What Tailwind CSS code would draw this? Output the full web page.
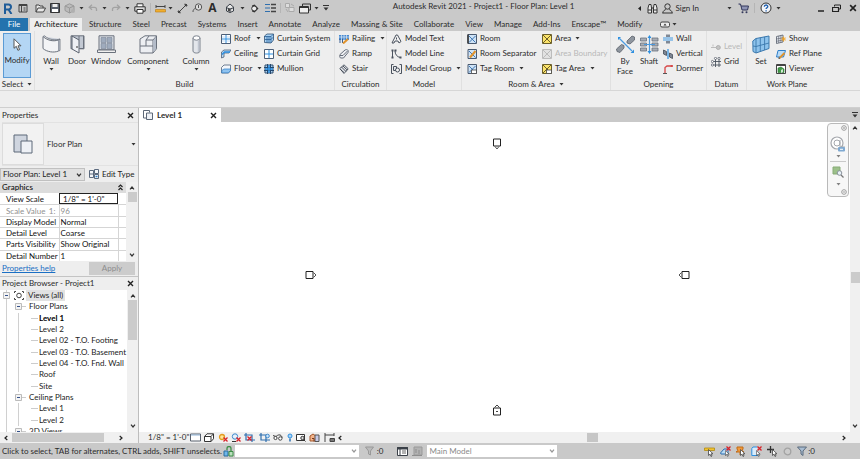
<!DOCTYPE html>
<html lang="en">
<head>
  <meta charset="UTF-8" />
  <meta name="viewport" content="width=device-width, initial-scale=1.0" />
  <title>Autodesk Revit 2021 - Project1 - Floor Plan: Level 1</title>
  <script src="https://cdn.jsdelivr.net/npm/@tailwindcss/browser@4"></script>
</head>
<body class="h-screen overflow-hidden flex flex-col bg-[#eeeeee] text-[#2b2b2b] text-[8px] leading-[11px] font-['Lato','Noto_Sans',sans-serif] cursor-default">

  <!-- Shared glyphs -->
  <svg class="hidden">
    <symbol id="caret" viewBox="0 0 5 3"><path d="M0.5 0h4L2.500 2.500z" fill="#333" /></symbol>
    <symbol id="up" viewBox="0 0 6 4"><path d="M1 3.300 3 1l2 2.300" fill="none" stroke="#333" stroke-width="1.200" /></symbol>
    <symbol id="down" viewBox="0 0 6 4"><path d="M1 .7 3 3 5 .7" fill="none" stroke="#333" stroke-width="1.200" /></symbol>
    <symbol id="left" viewBox="0 0 4 6"><path d="M3.300 1 1 3l2.300 2" fill="none" stroke="#222" stroke-width="1.200" /></symbol>
    <symbol id="right" viewBox="0 0 4 6"><path d="M.7 1 3 3 .7 5" fill="none" stroke="#222" stroke-width="1.200" /></symbol>
    <symbol id="close" viewBox="0 0 7 7"><path d="M1 1l5 5M6 1 1 6" fill="none" stroke="#222" stroke-width="1.400" /></symbol>
    <symbol id="plan" viewBox="0 0 20 20"><path d="M1 1h13v17H1z" fill="#cfd5df" stroke="#5d6878" /><path d="M8 7h11v12H8z" fill="#eef1f6" stroke="#5d6878" /></symbol>
    <symbol id="redx" viewBox="0 0 5 5"><path d="M.5.5l4 4M4.500.5l-4 4" stroke="#d8232a" stroke-width="1.300" /></symbol>
    <symbol id="pointer" viewBox="0 0 6 8"><path d="M.5.5v6l1.500-1.300 1 2.300 1-.5-1-2.200h2z" fill="#fff" stroke="#444" stroke-width=".8" /></symbol>
    <symbol id="minusbox" viewBox="0 0 7 7"><path d="M.5.5h6v6h-6z" fill="#f4f4f4" stroke="#bbb" /><path d="M2 3.500h3" stroke="#34508a" /></symbol>
    <symbol id="binder" viewBox="0 0 11 11"><path d="M.5 1.500h10v8H.5z" fill="#fff" stroke="#3a4048" /><path d="M.5 1.500h10v1.500H.5zM3 3v6.500" fill="#3a4048" stroke="#3a4048" /><path d="M5 5h4M5 7h4" stroke="#666" /></symbol>
  </svg>

  <!-- Title bar -->
  <header class="h-4 shrink-0 flex items-center bg-[#c9c9c9]">
    <div class="w-[34px] flex items-center gap-[5px] pl-[3px]">
      <svg class="w-[10px] h-[11px]" viewBox="0 0 10 11"><path d="M2 11V1.500h3.500a2.300 2.300 0 0 1 0 5H2M5.500 6.500 8.500 11" fill="none" stroke="#1f5c99" stroke-width="2" /></svg>
      <svg class="w-[10px] h-[10px]" viewBox="0 0 10 10"><path d="M1 1.500h8v7.500H1z" fill="none" stroke="#444" /><path d="M1 2.500h8M3.500 3v6M5.500 5h2M5.500 7h2" stroke="#444" /></svg>
    </div>
    <nav class="flex items-center gap-1 pl-[1px]" aria-label="Quick access">
      <button aria-label="Open"><svg class="w-[11px] h-[9px]" viewBox="0 0 11 9"><path d="M1 8V1h3l1 1h3v2M1 8l2-4h7.500L8.500 8z" fill="#e8e8e8" stroke="#444" /></svg></button>
      <button aria-label="Save"><svg class="w-[10px] h-[10px]" viewBox="0 0 10 10"><path d="M.5.5h9v9h-9z" fill="#59606b" stroke="#333" /><path d="M2.500 1h5v3h-5z" fill="#eee" /><path d="M2 6h6v3H2z" fill="#fff" /></svg></button>
      <button aria-label="Synchronize" class="flex items-center gap-[3px]"><svg class="w-[12px] h-[11px]" viewBox="0 0 12 11"><path d="M5.500.8 10 3v4.500L5.500 10 1 7.500V3z" fill="#bbb" stroke="#999" /><path d="M1 3l4.500 2L10 3M5.500 5v5" fill="none" stroke="#999" /><circle cx="9" cy="8" r="2" fill="#b0b0b0" /></svg><svg class="w-[5px] h-[3px]"><use href="#caret" /></svg></button>
      <button aria-label="Undo" class="flex items-center gap-1"><svg class="w-[10px] h-[8px]" viewBox="0 0 10 8"><path d="M4 .8 1.200 3.300 4 5.800M1.500 3.300H6.500a2 2 0 0 1 2 2V7" fill="none" stroke="#a2a2a2" stroke-width="1.300" /></svg><svg class="w-[5px] h-[3px]"><use href="#caret" /></svg></button>
      <button aria-label="Redo" class="flex items-center gap-1"><svg class="w-[10px] h-[8px]" viewBox="0 0 10 8"><path d="M6 .8 8.800 3.300 6 5.800M8.500 3.300H3.500a2 2 0 0 0-2 2V7" fill="none" stroke="#a2a2a2" stroke-width="1.300" /></svg><svg class="w-[5px] h-[3px]"><use href="#caret" /></svg></button>
      <button aria-label="Print"><svg class="w-[12px] h-[11px]" viewBox="0 0 12 11"><path d="M3 4V.8h6V4" fill="#fff" stroke="#333" /><path d="M.8 3.800h10.400v4.400H.8z" fill="#dcdcdc" stroke="#333" /><path d="M3 6.500h6v3.700H3z" fill="#fff" stroke="#333" /></svg></button>
      <span class="w-px h-[10px] bg-[#b5b5b5]"></span>
      <button aria-label="Measure" class="flex items-center gap-[2px]"><svg class="w-[11px] h-[9px]" viewBox="0 0 11 9"><path d="M1 1v3M10 1v3M1 2.500h9" stroke="#444" /><path d="M.5 5.500h10v2.500H.5z" fill="#f0ae2e" stroke="#b87a14" stroke-width=".6" /></svg><svg class="w-[5px] h-[3px]"><use href="#caret" /></svg></button>
      <button aria-label="Aligned dimension"><svg class="w-[11px] h-[11px]" viewBox="0 0 11 11"><path d="M2 9 9 2" stroke="#444" /><path d="M0.500 8 3 10.500M8 .5l2.500 2.500" stroke="#444" stroke-width=".8" /><path d="M1 10l.5-3L4 9.500zM10 1 7 1.500 9.500 4z" fill="#333" /></svg></button>
      <button aria-label="Tag by category"><svg class="w-[11px] h-[10px]" viewBox="0 0 11 10"><circle cx="6.500" cy="4" r="3.200" fill="#ddd" stroke="#555" /><path d="M6.500 2v3M1 9c0-2 .5-3 2.500-3.500" fill="none" stroke="#555" /></svg></button>
      <button aria-label="Text" class="w-[11px] font-bold text-[12px] leading-[14px] font-['Open_Sans',sans-serif]">A</button>
      <button aria-label="Default 3D view" class="flex items-center gap-[5px] pl-[3px]"><svg class="w-[10px] h-[10px]" viewBox="0 0 10 10"><path d="M1 4.500 5 1l4 3.500-4 1.500zM1.500 4.500V8L5 9.500V6M5 9.500 8.500 8V4.500" fill="#e8e8e8" stroke="#3a4048" /><circle cx="4" cy="7" r="1.200" fill="#444" /></svg><svg class="w-[5px] h-[3px]"><use href="#caret" /></svg></button>
      <button aria-label="Section" class="pl-[1px]"><svg class="w-[9px] h-[9px]" viewBox="0 0 9 9"><path d="M2 1.500 4.500 .5 8.500 4.500l-4 4L2 7.500" fill="#333" /><circle cx="4.200" cy="4.500" r="2.500" fill="#eee" stroke="#333" /></svg></button>
      <button aria-label="Thin lines" class="pl-[2px]"><svg class="w-[11px] h-[10px]" viewBox="0 0 11 10"><path d="M0 1.500h5M0 5h5M0 8.500h5" stroke="#2f6fae" /><path d="M6 1.500h5M6 5h5M6 8.500h5" stroke="#444" stroke-width="1.500" /></svg></button>
      <span class="w-px h-[10px] bg-[#b5b5b5]"></span>
      <button aria-label="Close inactive views"><svg class="w-[10px] h-[10px]" viewBox="0 0 10 10"><path d="M.5.500h4v4h-4zM4 4.500h5v4H4z" fill="#ddd" stroke="#aaa" /><path d="M6 1l3 2M1 6l2 3" stroke="#aaa" /></svg></button>
      <button aria-label="Switch windows" class="flex items-center gap-[3px]"><svg class="w-[12px] h-[11px]" viewBox="0 0 12 11"><path d="M3.500 3V1h8v6H10" fill="none" stroke="#333" /><path d="M.5 3.500h9v6.500h-9z" fill="#eee" stroke="#333" /><path d="M.5 4.500h9" stroke="#333" /></svg><svg class="w-[5px] h-[3px]"><use href="#caret" /></svg></button>
      <button aria-label="Customize toolbar"><svg class="w-[6px] h-[6px]" viewBox="0 0 6 6"><path d="M0 .5h6" stroke="#333" /><path d="M.5 2.500h5L3 5.500z" fill="#333" /></svg></button>
    </nav>
    <h1 class="ml-auto mr-16 pb-1">Autodesk Revit 2021 - Project1 - Floor Plan: Level 1</h1>
    <div class="flex items-center">
      <svg class="w-[3px] h-[5px] mr-[6px]" viewBox="0 0 3 5"><path d="M3 0v5L0 2.500z" fill="#222" /></svg>
      <button aria-label="Search"><svg class="w-[11px] h-[11px]" viewBox="0 0 11 11"><path d="M1 10V5l1-3.500h2L4.500 5v5zM6.500 10V5L7 1.500h2l1 3.500v5zM4.500 5h2" fill="#ececec" stroke="#333" /><path d="M1 7h3.500M6.500 7H10" stroke="#333" /></svg></button>
      <button class="flex items-center gap-[2px] ml-1"><svg class="w-[11px] h-[11px]" viewBox="0 0 11 11"><circle cx="5.500" cy="3.500" r="2.700" fill="none" stroke="#333" /><path d="M.8 10.200c0-2.500 2-3.200 3-3.700M10.200 10.200c0-2.500-2-3.200-3-3.700M.5 10h10" fill="none" stroke="#333" /></svg>Sign In</button>
      <svg class="w-[5px] h-[3px] ml-7 mr-[6px]"><use href="#caret" /></svg>
      <button aria-label="App store"><svg class="w-[11px] h-[11px]" viewBox="0 0 11 11"><path d="M.5 1h2l1.500 6h5.500l1-4H3" fill="#8d93b5" stroke="#34395c" /><circle cx="4.500" cy="9.300" r="1" fill="#34395c" /><circle cx="8.500" cy="9.300" r="1" fill="#34395c" /></svg></button>
      <span class="w-px h-[10px] bg-[#b5b5b5] ml-[5px] mr-[5px]"></span>
      <button aria-label="Help" class="flex items-center gap-1"><svg class="w-[12px] h-[12px]" viewBox="0 0 12 12"><circle cx="6" cy="6" r="5" fill="#f2f4f8" stroke="#333" /><path d="M4.300 4.800c0-2.400 3.500-2.300 3.500-.2 0 1.200-1.700 1.300-1.700 2.500M6.100 8.200v1.200" fill="none" stroke="#1f5fae" stroke-width="1.300" /></svg><svg class="w-[5px] h-[3px]"><use href="#caret" /></svg></button>
    </div>
    <div class="flex items-center gap-2 ml-[37px] mr-[3px]">
      <button aria-label="Minimize"><svg class="w-[6px] h-[8px]" viewBox="0 0 6 8"><path d="M0 7h6" stroke="#222" stroke-width="1.500" /></svg></button>
      <button aria-label="Restore"><svg class="w-[9px] h-[8px]" viewBox="0 0 9 8"><path d="M2.500 2.500V1h6v4H7" fill="none" stroke="#222" /><path d="M.5 3.500h6v4h-6zM.5 3.500h6" fill="none" stroke="#222" stroke-width="1.200" /></svg></button>
      <button aria-label="Close"><svg class="w-[8px] h-[8px]"><use href="#close" /></svg></button>
    </div>
  </header>

  <!-- Ribbon tabs -->
  <nav class="h-[15px] shrink-0 flex items-stretch gap-x-[11px] bg-[#c9c9c9] pt-[2px] leading-[13px] whitespace-nowrap">
    <div class="flex gap-[2px] -mr-1">
      <a href="#" class="w-7 bg-[#2473ae] text-white text-center">File</a>
      <a href="#" class="w-[52px] bg-[#eeeeee] text-[#111] text-center">Architecture</a>
    </div>
    <a href="#">Structure</a>
    <a href="#">Steel</a>
    <a href="#">Precast</a>
    <a href="#">Systems</a>
    <a href="#">Insert</a>
    <a href="#">Annotate</a>
    <a href="#">Analyze</a>
    <a href="#">Massing &amp; Site</a>
    <a href="#">Collaborate</a>
    <a href="#">View</a>
    <a href="#">Manage</a>
    <a href="#">Add-Ins</a>
    <a href="#">Enscape™</a>
    <a href="#">Modify</a>
    <button aria-label="Ribbon display" class="flex items-center gap-[2px] ml-[7px]"><svg class="w-[10px] h-[7px]" viewBox="0 0 10 7"><rect x=".5" y="1" width="9" height="5" rx="1.500" fill="#eee" stroke="#444" /><path d="M3.500 4.500h3L5 2.500z" fill="#333" /></svg><svg class="w-[5px] h-[3px]"><use href="#caret" /></svg></button>
  </nav>

  <!-- Ribbon -->
  <div class="h-[60px] shrink-0 flex border-b border-[#d6d6d6] whitespace-nowrap">
    <section class="w-[35px] shrink-0 flex flex-col items-center justify-between border-r border-[#e0e0e0] pt-[2px]">
      <button class="w-[28px] h-[45px] bg-[#b4d6f4] border border-[#5b9bd5] flex flex-col items-center pt-1 gap-1">
        <svg class="w-[9px] h-[13px]" viewBox="0 0 9 13"><path d="M1 .8v9.500l2.300-2 1.600 4 1.700-.7L5 7.800h3z" fill="#fff" stroke="#555" /></svg>Modify</button>
      <button class="flex items-center gap-1">Select<svg class="w-[5px] h-[3px]"><use href="#caret" /></svg></button>
    </section>

    <section class="w-[300px] shrink-0 flex flex-col justify-between border-r border-[#e0e0e0] pt-[2px]">
      <div class="flex">
        <button class="w-[32px] flex flex-col items-center pt-[2px]"><svg class="w-[19px] h-[19px] mb-[2px]" viewBox="0 0 19 19"><path d="M1 1.500C6 6 12 6.500 16.500 5v11C12 18 5 17 1 13.500z" fill="#f3f4f6" stroke="#6a717c" /><path d="M16.500 5l1.500-1v11.500L16.500 16M1 1.500 2.500.8C7 5 13 5.500 18 4" fill="#c8ced8" stroke="#6a717c" stroke-width=".8" /></svg>Wall<svg class="w-[5px] h-[3px] mt-px"><use href="#caret" /></svg></button>
        <button class="w-[20px] flex flex-col items-center pt-[2px]"><svg class="w-[15px] h-[19px] mb-[2px]" viewBox="0 0 15 19"><path d="M1 .8h13v13h-4M1 .8v13h3" fill="#c3c9d3" stroke="#6a717c" /><path d="M2 1l7 4v13l-7-4z" fill="#eef0f4" stroke="#59616d" /><path d="M9 5V1M9 13.500h4.500V1" fill="none" stroke="#6a717c" /><path d="M7 11v2" stroke="#333" /></svg>Door</button>
        <button class="w-[38px] flex flex-col items-center pt-[2px]"><svg class="w-[19px] h-[19px] mb-[2px]" viewBox="0 0 19 19"><path d="M2 .8h15v14H2z" fill="#dfe3e9" stroke="#6a717c" /><path d="M4 2.500h5v5H4zM10 2.500h5v5h-5zM4 8.500h5v5H4zM10 8.500h5v5h-5z" fill="#9fabbd" stroke="#7a8496" stroke-width=".6" /><path d="M.5 15h18v2.500H.5z" fill="#f0f0f0" stroke="#6a717c" /></svg>Window</button>
        <button class="w-[46px] flex flex-col items-center pt-[2px]"><svg class="w-[19px] h-[19px] mb-[2px]" viewBox="0 0 19 19"><path d="M1 8V4L6 .8h11.500v13L14 18H2a1 1 0 0 1-1-1z" fill="#eceef2" stroke="#6a717c" /><path d="M1 11h6V5l3-4M7 5h7l3.500-4M14 5v13M7 11h7" fill="none" stroke="#6a717c" /><path d="M14 5.500 17 2v11.500L14.500 17z" fill="#b4bcc9" /></svg>Component<svg class="w-[5px] h-[3px] mt-px"><use href="#caret" /></svg></button>
        <button class="w-[50px] flex flex-col items-center pt-[2px]"><svg class="w-[9px] h-[19px] mb-[2px]" viewBox="0 0 9 19"><path d="M1 3v13c0 2.700 7 2.700 7 0V3" fill="#e3e6eb" stroke="#7a818c" /><ellipse cx="4.500" cy="3" rx="3.500" ry="2.200" fill="#fff" stroke="#7a818c" /><path d="M6.500 6v11" stroke="#c0c6d0" stroke-width="1.500" /></svg>Column<svg class="w-[5px] h-[3px] mt-px"><use href="#caret" /></svg></button>
        <div class="w-[43px] flex flex-col gap-1 items-start">
          <button class="flex items-center gap-[3px]"><svg class="w-[10px] h-[10px]" viewBox="0 0 10 10"><path d="M.5.500h9v9h-9z" fill="#fff" stroke="#4c5f78" /><path d="M5 1v8M1 5h8" stroke="#2d8fe0" /><path d="M1 3h8M1 7h8" stroke="#9cc4ea" stroke-width=".6" /></svg>Roof<svg class="w-[5px] h-[3px] ml-[2px]"><use href="#caret" /></svg></button>
          <button class="flex items-center gap-[3px]"><svg class="w-[10px] h-[10px]" viewBox="0 0 10 10"><path d="M.5 9V3L3 1h7L8 4H3v4z" fill="#bcd9f2" stroke="#4c5f78" stroke-width=".8" /><path d="M1 5.500 3.500 3H9" fill="none" stroke="#2d8fe0" stroke-width="1.400" /></svg>Ceiling</button>
          <button class="flex items-center gap-[3px]"><svg class="w-[10px] h-[10px]" viewBox="0 0 10 10"><path d="M.5 9V3.500L3 1h6.500v5.500L7.500 9z" fill="#f3f6fa" stroke="#4c5f78" stroke-width=".8" /><path d="M.8 8.800V6.500L3 5h6.500v1.500L7.500 8.800z" fill="#8fc3f0" stroke="#2d7fca" stroke-width=".7" /></svg>Floor<svg class="w-[5px] h-[3px] ml-[2px]"><use href="#caret" /></svg></button>
        </div>
        <div class="flex flex-col gap-1 items-start">
          <button class="flex items-center gap-[3px]"><svg class="w-[10px] h-[11px]" viewBox="0 0 10 11"><path d="M.5 3 3 1h6.500v6L7 10 .5 9.500z" fill="#a9d2f5" stroke="#34506f" stroke-width=".8" /><path d="M.5 3.500H7V10M7 3.500 9.500 1M3 3.500V10M5 3.500V10M1 6.500h6l2.500-2.500" fill="none" stroke="#2a5f97" stroke-width=".8" /></svg>Curtain System</button>
          <button class="flex items-center gap-[3px]"><svg class="w-[10px] h-[10px]" viewBox="0 0 10 10"><path d="M.5.500h9v9h-9z" fill="#fff" stroke="#4c5f78" /><path d="M5 1v8M1 5h8" stroke="#2d8fe0" /></svg>Curtain Grid</button>
          <button class="flex items-center gap-[3px]"><svg class="w-[10px] h-[10px]" viewBox="0 0 10 10"><path d="M1 1h8v8H1z" fill="#a9d2f5" stroke="#34506f" /><path d="M3.500 0v10M6.500 0v10M0 3.500h10M0 6.500h10" stroke="#24486e" /><path d="M5 1v8M1 5h8" stroke="#2d8fe0" stroke-width="1.500" /></svg>Mullion</button>
        </div>
      </div>
      <h2 class="text-center">Build</h2>
    </section>

    <section class="w-[52px] shrink-0 flex flex-col justify-between border-r border-[#e0e0e0] pt-[2px]">
      <div class="flex flex-col gap-1 items-start pl-1">
        <button class="flex items-center gap-[3px]"><svg class="w-[10px] h-[10px]" viewBox="0 0 10 10"><path d="M0 1h10v5H0z" fill="#4a8ad0" /><path d="M0 3h10M2.500 1v8M5 1v5M7.500 1v4" stroke="#dbe9f7" stroke-width=".7" /><path d="M1 5v4M3.500 5v4" stroke="#3a5f90" /><path d="M4 9.500 9 5" stroke="#e0932c" stroke-width="2" /></svg>Railing<svg class="w-[5px] h-[3px] ml-[2px]"><use href="#caret" /></svg></button>
        <button class="flex items-center gap-[3px]"><svg class="w-[10px] h-[10px]" viewBox="0 0 10 10"><path d="M1 5.500 6 1c2-1 4 0 3 2.500L4.500 9H1.500C.5 8 .5 6.500 1 5.500zM1 6.500h3L8.500 2" fill="#eef0f4" stroke="#666e7a" /></svg>Ramp</button>
        <button class="flex items-center gap-[3px]"><svg class="w-[10px] h-[10px]" viewBox="0 0 10 10"><path d="M.8 4.500 5 .8l4.200 4L5 9.500z" fill="#e2e5ea" stroke="#555d69" /><path d="M2.500 3l4.500 4.500M4 2l4.200 4M1.500 5.500 5 8.500" stroke="#3b424d" stroke-width=".9" /></svg>Stair</button>
      </div>
      <h2 class="text-center">Circulation</h2>
    </section>

    <section class="w-[75px] shrink-0 flex flex-col justify-between border-r border-[#e0e0e0] pt-[2px]">
      <div class="flex flex-col gap-1 items-start pl-1">
        <button class="flex items-center gap-[3px]"><svg class="w-[11px] h-[10px]" viewBox="0 0 11 10"><path d="M1 9 5 1h1.500L10 7.500 8 9 7 7H4L3 9zM5.500 3.500v2" fill="#f4f4f4" stroke="#4a525e" /></svg>Model Text</button>
        <button class="flex items-center gap-[3px]"><svg class="w-[11px] h-[10px]" viewBox="0 0 11 10"><path d="M1.500 1v8M4 1.500c0 4 2 6.500 5.500 7" fill="none" stroke="#4a525e" /><path d="M.5.500h2v2h-2zM.5 7.500h2v2h-2zM3.500.5h2v2h-2zM8.500 7.500h2v2h-2z" fill="#4a525e" /></svg>Model Line</button>
        <button class="flex items-center gap-[3px]"><svg class="w-[11px] h-[10px]" viewBox="0 0 11 10"><path d="M2.500.5h-2v9h2M8.500.5h2v9h-2" fill="none" stroke="#4a525e" /><path d="M2.500 2.500h3v4h-3z" fill="#e2e5ea" stroke="#4a525e" /><circle cx="6.500" cy="6" r="2" fill="#f4f4f4" stroke="#4a525e" /></svg>Model Group<svg class="w-[5px] h-[3px] ml-[1px]"><use href="#caret" /></svg></button>
      </div>
      <h2 class="text-center">Model</h2>
    </section>

    <section class="w-[149px] shrink-0 flex flex-col justify-between border-r border-[#e0e0e0] pt-[2px]">
      <div class="flex pl-[5px]">
        <div class="w-[75px] flex flex-col gap-1 items-start">
          <button class="flex items-center gap-[3px]"><svg class="w-[10px] h-[10px]" viewBox="0 0 10 10"><path d="M1 .5h8.500v9H1z" fill="#cfe3f6" stroke="#4a5a70" /><path d="M2 2l6.500 6.500M8.500 2 2 8.500" stroke="#3f78b5" /><path d="M1 .5v9" stroke="#333" stroke-width="1.500" /></svg>Room</button>
          <button class="flex items-center gap-[3px]"><svg class="w-[10px] h-[10px]" viewBox="0 0 10 10"><path d="M1 .5h8.500v9H1z" fill="#cfe3f6" stroke="#4a5a70" /><path d="M2 2l6.500 6.500" stroke="#3f78b5" /><path d="M3 8.500 8.500 2" stroke="#e0932c" stroke-width="2" /></svg>Room Separator</button>
          <button class="flex items-center gap-[3px]"><svg class="w-[10px] h-[10px]" viewBox="0 0 10 10"><path d="M1 .5h8.500v9H1z" fill="#cfe3f6" stroke="#4a5a70" /><path d="M2 2l6.500 6.500M8.500 2 2 8.500" stroke="#3f78b5" /><path d="M4.500 6h5v3.500h-5z" fill="#fff" stroke="#444" stroke-width=".8" /></svg>Tag Room<svg class="w-[5px] h-[3px] ml-[2px]"><use href="#caret" /></svg></button>
        </div>
        <div class="flex flex-col gap-1 items-start">
          <button class="flex items-center gap-[3px]"><svg class="w-[10px] h-[10px]" viewBox="0 0 10 10"><path d="M.5.500h9v9h-9z" fill="#fbe36a" stroke="#6b5f2a" /><path d="M1 1l8 8M9 1 1 9" stroke="#6b5f2a" /></svg>Area<svg class="w-[5px] h-[3px] ml-[1px]"><use href="#caret" /></svg></button>
          <button disabled class="flex items-center gap-[3px] text-[#b8b8b8]"><svg class="w-[10px] h-[10px]" viewBox="0 0 10 10"><path d="M.5.500h9v9h-9z" fill="#e2e2e2" stroke="#bcbcbc" /><path d="M1 1l8 8M9 1 1 9" stroke="#bcbcbc" /></svg>Area Boundary</button>
          <button class="flex items-center gap-[3px]"><svg class="w-[10px] h-[10px]" viewBox="0 0 10 10"><path d="M.5.500h9v9h-9z" fill="#fbe36a" stroke="#6b5f2a" /><path d="M1 1l8 8M9 1 1 9" stroke="#6b5f2a" /><path d="M4.500 6h5v3.500h-5z" fill="#fff" stroke="#444" stroke-width=".8" /></svg>Tag Area<svg class="w-[5px] h-[3px] ml-[2px]"><use href="#caret" /></svg></button>
        </div>
      </div>
      <button class="flex items-center justify-center gap-1">Room &amp; Area<svg class="w-[5px] h-[3px]"><use href="#caret" /></svg></button>
    </section>

    <section class="w-[96px] shrink-0 flex flex-col justify-between border-r border-[#e0e0e0] pt-[2px]">
      <div class="flex pl-[2px]">
        <button class="w-[24px] flex flex-col items-center pt-[2px] leading-[10px]"><svg class="w-[19px] h-[19px] mb-[2px]" viewBox="0 0 19 19"><path d="M11 6l5-5 2.500 1v3L14 9l-3-1zM.5 14l5-4.500 2.500 1v2.500L4 17.500l-3-1z" fill="#8f969f" stroke="#5a616b" stroke-width=".8" /><path d="M3.500 3.500l12.500 12.500" stroke="#4b9ae0" stroke-width="1.200" /><path d="M2 5V2h3zM18 14.500V18h-3.500z" fill="#2d8fe0" /></svg>By<br />Face</button>
        <button class="w-[24px] flex flex-col items-center pt-[2px]"><svg class="w-[19px] h-[19px] mb-[2px]" viewBox="0 0 19 19"><path d="M.5 3h6v3h-6zM.5 8h6v3h-6zM.5 13h6v3h-6zM12 3h6v3h-6zM12 8h6v3h-6zM12 13h6v3h-6z" fill="#a7adb6" stroke="#6a717c" stroke-width=".8" /><path d="M9.500 2v15M4 9.500h11" stroke="#4b9ae0" stroke-width="1.200" /><path d="M7.500 3 9.500 0l2 3zM7.500 16l2 3 2-3z" fill="#2d8fe0" /></svg>Shaft</button>
        <div class="flex flex-col gap-1 items-start pl-[2px]">
          <button class="flex items-center gap-[3px]"><svg class="w-[10px] h-[10px]" viewBox="0 0 10 10"><path d="M3 .5h4v2.500H3zM3 7h4v2.500H3z" fill="#7e8794" /><path d="M0 4h10M0 6h10" stroke="#2d8fe0" stroke-width=".9" /></svg>Wall</button>
          <button class="flex items-center gap-[3px]"><svg class="w-[10px] h-[10px]" viewBox="0 0 10 10"><path d="M.5 1l3 1.500v4l-3-1.500zM6.500 4l3 1.500v4l-3-1.500z" fill="#7e8794" stroke="#444c58" stroke-width=".8" /><path d="M5 0v10" stroke="#2d8fe0" stroke-width="1.200" /></svg>Vertical</button>
          <button class="flex items-center gap-[3px]"><svg class="w-[10px] h-[10px]" viewBox="0 0 10 10"><path d="M2 9V3.500L4 2h6" fill="none" stroke="#d64545" stroke-width="1.300" /><path d="M0 9.500h4" stroke="#555" /><circle cx="8.500" cy="2" r="1" fill="#d64545" /></svg>Dormer</button>
        </div>
      </div>
      <h2 class="text-center">Opening</h2>
    </section>

    <section class="w-[40px] shrink-0 flex flex-col justify-between border-r border-[#e0e0e0] pt-[10px]">
      <div class="flex flex-col gap-1 items-start pl-1">
        <button disabled class="flex items-center gap-[3px] text-[#b8b8b8]"><svg class="w-[10px] h-[10px]" viewBox="0 0 10 10"><path d="M0 5.500h5M2 2.500v2" stroke="#bcbcbc" /><circle cx="7.300" cy="5.500" r="2" fill="#c4c4c4" stroke="#b0b0b0" /></svg>Level</button>
        <button class="flex items-center gap-[3px]"><svg class="w-[10px] h-[10px]" viewBox="0 0 10 10"><path d="M4.500 2v8M8 2v8M2 4.500h8M2 8h8" stroke="#4a525e" stroke-width=".9" /><circle cx="4.500" cy="1.400" r="1.100" fill="#fff" stroke="#4a525e" stroke-width=".7" /><circle cx="8" cy="1.400" r="1.100" fill="#fff" stroke="#4a525e" stroke-width=".7" /><circle cx="1.400" cy="4.500" r="1.100" fill="#fff" stroke="#4a525e" stroke-width=".7" /><circle cx="1.400" cy="8" r="1.100" fill="#fff" stroke="#4a525e" stroke-width=".7" /></svg>Grid</button>
      </div>
      <h2 class="text-center">Datum</h2>
    </section>

    <section class="w-[80px] shrink-0 flex flex-col justify-between pt-[2px]">
      <div class="flex pl-1">
        <button class="w-[20px] flex flex-col items-center pt-[2px]"><svg class="w-[18px] h-[19px] mb-[2px]" viewBox="0 0 18 19"><path d="M.8 6 4 3.500l13-2.500v12.500L4 18l-3-1.500z" fill="#8ec3ec" stroke="#3b78ad" /><path d="M4 3.500V18M8.300 2.800v13.700M12.600 2v13M1 11l3 .5 13-3.500" fill="none" stroke="#3b78ad" stroke-width=".9" /></svg>Set</button>
        <div class="flex flex-col gap-1 items-start pl-[5px]">
          <button class="flex items-center gap-[3px]"><svg class="w-[10px] h-[10px]" viewBox="0 0 10 10"><path d="M.5 2.500 7 1v7L.5 9.500z" fill="#e4e8ee" stroke="#555d69" stroke-width=".8" /><path d="M2.700 2v7M4.900 1.500v7M.5 5l6.500-1.200M.5 7.300 7 6" stroke="#555d69" stroke-width=".6" /><path d="M7.500 2.500v5M5.300 5h4.500M6 3.400l3.200 3.200M9.200 3.400 6 6.600" stroke="#f0a020" stroke-width=".9" /></svg>Show</button>
          <button class="flex items-center gap-[3px]"><svg class="w-[10px] h-[10px]" viewBox="0 0 10 10"><path d="M2 1.500h7.500L7.500 8H.5z" fill="#b9dbf6" stroke="#2d7fca" /><path d="M3.500 9 8.500 4" stroke="#e0932c" stroke-width="1.800" /><path d="M2.500 10l.3-2 1.500 1.500z" fill="#333" /></svg>Ref Plane</button>
          <button class="flex items-center gap-[3px]"><svg class="w-[10px] h-[10px]" viewBox="0 0 10 10"><path d="M.5.500h9v9h-9z" fill="#fff" stroke="#444" /><path d="M.5 1.500h9" stroke="#444" /><path d="M2 4l3-1 3 2v3.500H2z" fill="#3f9a46" stroke="#2a6e30" stroke-width=".6" /><path d="M5 9V6l2-1v3z" fill="#cfe8d0" /></svg>Viewer</button>
        </div>
      </div>
      <h2 class="text-center">Work Plane</h2>
    </section>
  </div>

  <!-- Options bar -->
  <div class="h-[17px] shrink-0 border-b border-[#cfcfcf]"></div>

  <main class="flex-1 min-h-0 flex">
    <!-- Docked palettes -->
    <aside class="w-[139px] shrink-0 flex flex-col border-r border-[#bdbdbd]">
      <section class="h-[169px] shrink-0 flex flex-col border-b border-[#c4c4c4]">
        <div class="h-[14px] shrink-0 flex items-center justify-between pl-[2px] pr-1"><h2>Properties</h2><button aria-label="Close properties"><svg class="w-[7px] h-[7px]"><use href="#close" /></svg></button></div>
        <button class="h-[44px] shrink-0 flex items-center text-left border-y border-[#e2e2e2] pr-[2px] ml-[2px]">
          <span class="w-[42px] h-[42px] border border-[#dcdcdc] bg-[#f2f2f2] flex items-center justify-center"><svg class="w-[20px] h-[20px]"><use href="#plan" /></svg></span>
          <span class="flex-1 pl-[3px]">Floor Plan</span>
          <svg class="w-[5px] h-[3px]"><use href="#caret" /></svg>
        </button>
        <div class="h-[16px] shrink-0 flex items-center gap-1 text-[#222]">
          <div class="relative">
            <select aria-label="Instance" class="w-[85px] h-[13px] pl-[2px] bg-[#e1e1e1] border border-[#c0c0c0] appearance-none leading-[11px]"><option>Floor Plan: Level 1</option></select>
            <svg class="absolute right-[3px] top-[5px] w-[6px] h-[4px] pointer-events-none"><use href="#down" /></svg>
          </div>
          <button class="flex items-center gap-[3px]"><svg class="w-[10px] h-[10px]" viewBox="0 0 10 10"><path d="M.5 1.500h4v7h-4zM5.500.5h4v4h-4zM5.500 5.500h4v4h-4zM.5 5h4" fill="#f4f6f9" stroke="#4a5a70" stroke-width=".9" /><path d="M6.500 7.500h2" stroke="#2d7fca" stroke-width="1.500" /></svg>Edit Type</button>
        </div>
        <div class="h-[79px] shrink-0 flex">
          <div class="flex-1 overflow-hidden bg-white">
            <div class="h-[11px] flex items-center justify-between bg-[#dcdcdc] pl-[2px] pr-[3px] font-medium text-[#111]">Graphics<svg class="w-[5px] h-[7px]" viewBox="0 0 5 7"><path d="M.5 3l2-2 2 2M.5 6l2-2 2 2" fill="none" stroke="#222" stroke-width="1.200" /></svg></div>
            <table class="w-full h-[68px] border-collapse table-fixed whitespace-nowrap leading-[10px] text-[#111]">
              <colgroup><col class="w-[59px]" /><col class="w-[59px]" /><col /></colgroup>
              <tr class="border-b border-[#d5d5d5]"><td class="p-0 pl-[6px]"><label for="scale">View Scale</label></td><td class="p-0"><input id="scale" value="1/8&quot; = 1'-0&quot;" class="block w-full h-[11px] border border-[#222] pl-[3px] bg-white" /></td><td class="p-0"></td></tr>
              <tr class="border-b border-[#d5d5d5] text-[#909090]"><td class="p-0 pl-[6px]"><div class="flex justify-between pr-[3px]"><span>Scale Value</span><span>1:</span></div></td><td class="p-0 pl-[1px] border-x border-[#d5d5d5]">96</td><td class="p-0"></td></tr>
              <tr class="border-b border-[#d5d5d5]"><td class="p-0 pl-[6px]">Display Model</td><td class="p-0 pl-[1px] border-x border-[#d5d5d5]">Normal</td><td class="p-0"></td></tr>
              <tr class="border-b border-[#d5d5d5]"><td class="p-0 pl-[6px]">Detail Level</td><td class="p-0 pl-[1px] border-x border-[#d5d5d5]">Coarse</td><td class="p-0"></td></tr>
              <tr class="border-b border-[#d5d5d5]"><td class="p-0 pl-[6px]">Parts Visibility</td><td class="p-0 pl-[1px] border-x border-[#d5d5d5]">Show Original</td><td class="p-0"></td></tr>
              <tr><td class="p-0 pl-[6px]">Detail Number</td><td class="p-0 pl-[1px] border-x border-[#d5d5d5]">1</td><td class="p-0"></td></tr>
            </table>
          </div>
          <div class="w-[12px] flex flex-col items-center bg-[#f0f0f0] pt-1 pb-1">
            <svg class="w-[6px] h-[4px]"><use href="#up" /></svg>
            <span class="w-[9px] h-[10px] mt-[2px] bg-[#cbcbcb]"></span>
            <svg class="w-[6px] h-[4px] mt-auto"><use href="#down" /></svg>
          </div>
        </div>
        <div class="flex-1 flex items-center justify-between pl-[2px] pr-[3px]">
          <a href="#" class="text-[#1a6fc4] underline">Properties help</a>
          <button disabled class="w-[46px] h-[13px] bg-[#cccccc] text-[#8c8c8c]">Apply</button>
        </div>
      </section>

      <section class="flex-1 min-h-0 flex flex-col">
        <div class="h-[13px] shrink-0 flex items-center justify-between pl-[2px] pr-1"><h2>Project Browser - Project1</h2><button aria-label="Close project browser"><svg class="w-[7px] h-[7px]"><use href="#close" /></svg></button></div>
        <div class="flex-1 min-h-0 flex bg-white">
          <div class="flex-1 overflow-hidden whitespace-nowrap text-[#222]">
            <ul class="h-[147px] flex flex-col ml-[6px] border-l border-[#d0d0d0] *:flex-1 *:flex *:items-center">
              <li><svg class="w-[7px] h-[7px] -ml-1 mr-1"><use href="#minusbox" /></svg><svg class="w-[10px] h-[9px] mr-[2px]" viewBox="0 0 10 9"><path d="M2 .5H.5V2M8 .5h1.500V2M2 8.500H.5V7M8 8.500h1.500V7" fill="none" stroke="#444" /><circle cx="5" cy="4.500" r="2.300" fill="none" stroke="#444" /></svg><span class="bg-[#e2e2e2] px-[2px]">Views (all)</span></li>
              <li class="pl-[8px]"><svg class="w-[7px] h-[7px]"><use href="#minusbox" /></svg><span class="w-1 h-px shrink-0 bg-[#ccc] mr-[3px]"></span>Floor Plans</li>
              <li class="ml-[11px] pl-[12px] border-l border-[#d0d0d0]"><span class="w-[7px] h-px shrink-0 bg-[#ccc] mr-px"></span><b class="text-black">Level 1</b></li>
              <li class="ml-[11px] pl-[12px] border-l border-[#d0d0d0]"><span class="w-[7px] h-px shrink-0 bg-[#ccc] mr-px"></span>Level 2</li>
              <li class="ml-[11px] pl-[12px] border-l border-[#d0d0d0]"><span class="w-[7px] h-px shrink-0 bg-[#ccc] mr-px"></span>Level 02 - T.O. Footing</li>
              <li class="ml-[11px] pl-[12px] border-l border-[#d0d0d0]"><span class="w-[7px] h-px shrink-0 bg-[#ccc] mr-px"></span>Level 03 - T.O. Basement</li>
              <li class="ml-[11px] pl-[12px] border-l border-[#d0d0d0]"><span class="w-[7px] h-px shrink-0 bg-[#ccc] mr-px"></span>Level 04 - T.O. Fnd. Wall</li>
              <li class="ml-[11px] pl-[12px] border-l border-[#d0d0d0]"><span class="w-[7px] h-px shrink-0 bg-[#ccc] mr-px"></span>Roof</li>
              <li class="ml-[11px] pl-[12px] border-l border-[#d0d0d0]"><span class="w-[7px] h-px shrink-0 bg-[#ccc] mr-px"></span>Site</li>
              <li class="pl-[8px]"><svg class="w-[7px] h-[7px]"><use href="#minusbox" /></svg><span class="w-1 h-px shrink-0 bg-[#ccc] mr-[3px]"></span>Ceiling Plans</li>
              <li class="ml-[11px] pl-[12px] border-l border-[#d0d0d0]"><span class="w-[7px] h-px shrink-0 bg-[#ccc] mr-px"></span>Level 1</li>
              <li class="ml-[11px] pl-[12px] border-l border-[#d0d0d0]"><span class="w-[7px] h-px shrink-0 bg-[#ccc] mr-px"></span>Level 2</li>
              <li class="pl-[8px]"><svg class="w-[7px] h-[7px]"><use href="#minusbox" /></svg><span class="w-1 h-px shrink-0 bg-[#ccc] mr-[3px]"></span>3D Views</li>
            </ul>
          </div>
          <div class="w-[11px] flex flex-col items-center bg-[#f0f0f0] pt-1 pb-1">
            <svg class="w-[6px] h-[4px]"><use href="#up" /></svg>
            <span class="w-[9px] h-[40px] mt-[2px] bg-[#cbcbcb]"></span>
            <svg class="w-[6px] h-[4px] mt-auto"><use href="#down" /></svg>
          </div>
        </div>
        <div class="h-[11px] shrink-0 flex items-center bg-[#f0f0f0] pl-1 pr-[15px]">
          <svg class="w-[4px] h-[6px]"><use href="#left" /></svg>
          <span class="w-[92px] h-[9px] ml-1 bg-[#cbcbcb]"></span>
          <svg class="w-[4px] h-[6px] ml-auto"><use href="#right" /></svg>
        </div>
      </section>
    </aside>

    <!-- Drawing area -->
    <section class="flex-1 min-w-0 flex flex-col">
      <div class="h-[14px] shrink-0 flex items-center justify-between bg-[#c9c9c9] pr-[2px]">
        <div class="w-[82px] h-full flex items-center gap-1 bg-white pl-1 pr-1 font-bold">
          <svg class="w-[10px] h-[10px]" viewBox="0 0 10 10"><path d="M.5 1.500V.5h6v2M.5 1v7h3" fill="#fff" stroke="#5d6878" /><path d="M3.500 3h6v6.500h-6z" fill="#eef1f6" stroke="#5d6878" /></svg>Level 1
          <button aria-label="Close view" class="ml-auto"><svg class="w-[7px] h-[7px]"><use href="#close" /></svg></button>
        </div>
        <svg class="w-[6px] h-[6px]" viewBox="0 0 6 6"><path d="M0 .5h6" stroke="#333" /><path d="M.5 2.500h5L3 5.500z" fill="#333" /></svg>
      </div>
      <div class="flex-1 min-h-0 flex">
        <div class="relative flex-1 bg-white">
          <!-- Elevation markers -->
          <svg class="absolute left-[50.4%] top-[7%] w-[9px] h-[12px] -translate-x-1/2 -translate-y-1/2" viewBox="0 0 9 12"><path d="M1 1h7v7H1z" fill="#fff" stroke="#222" /><path d="M2.500 8.500 4.500 11l2-2.500" fill="none" stroke="#555" /></svg>
          <svg class="absolute left-[24.2%] top-[49.500%] w-[12px] h-[9px] -translate-x-1/2 -translate-y-1/2" viewBox="0 0 12 9"><path d="M1 1h7v7H1z" fill="#fff" stroke="#222" /><path d="M8.500 2 11 4.500 8.500 7" fill="none" stroke="#555" /></svg>
          <svg class="absolute left-[76.600%] top-[49.500%] w-[12px] h-[9px] -translate-x-1/2 -translate-y-1/2" viewBox="0 0 12 9"><path d="M4 1h7v7H4z" fill="#fff" stroke="#222" /><path d="M3.500 2 1 4.500 3.500 7" fill="none" stroke="#555" /></svg>
          <svg class="absolute left-[50.4%] top-[93%] w-[9px] h-[12px] -translate-x-1/2 -translate-y-1/2" viewBox="0 0 9 12"><path d="M1 4h7v7H1z" fill="#fff" stroke="#222" /><path d="M2 3.500 4.500 1 7 3.500M3.500 7.500h2" fill="none" stroke="#444" /></svg>
          <!-- Navigation bar -->
          <div class="absolute right-[1px] top-[1px] w-[22px] h-[74px] flex flex-col items-center rounded border border-[#b9b9b9] bg-[#f7f7f7] text-[#777] pt-px pb-px">
            <svg class="w-[6px] h-[6px] self-end mr-px" viewBox="0 0 6 6"><circle cx="3" cy="3" r="2.300" fill="#fff" stroke="#999" /><path d="M2 2l2 2M4 2 2 4" stroke="#999" stroke-width=".6" /></svg>
            <svg class="w-[16px] h-[17px] mt-[5px]" viewBox="0 0 16 17"><circle cx="7" cy="7" r="6" fill="#fff" stroke="#a5a8ad" stroke-width="1.200" /><circle cx="7" cy="7" r="3" fill="none" stroke="#a5a8ad" /><path d="M10 4v7h5" fill="none" stroke="#a5a8ad" /><rect x="8" y="11" width="7" height="4.500" rx="1" fill="#7fa9d1" /><path d="M10 13.300h3" stroke="#fff" /></svg>
            <svg class="w-[5px] h-[3px] opacity-60 mt-[2px]"><use href="#caret" /></svg>
            <span class="w-4 h-px bg-[#c9c9c9] mt-[3px]"></span>
            <svg class="w-[12px] h-[12px] mt-[4px]" viewBox="0 0 12 12"><path d="M1 1h7v7H1z" fill="#9cc08a" stroke="#87ab76" /><circle cx="7.500" cy="7" r="2.300" fill="#e9f1f7" stroke="#8a929c" /><path d="M9 9l2.500 2.500" stroke="#777" stroke-width="1.300" /></svg>
            <svg class="w-[5px] h-[3px] opacity-60 mt-[5px]"><use href="#caret" /></svg>
            <svg class="w-[6px] h-[6px] self-end mr-px mt-auto" viewBox="0 0 6 6"><circle cx="3" cy="3" r="2.300" fill="#fff" stroke="#999" /><path d="M1.800 3h2.400" stroke="#999" /></svg>
          </div>
        </div>
        <div class="w-[10px] flex flex-col items-center bg-[#f0f0f0] py-1">
          <svg class="w-[6px] h-[4px]"><use href="#up" /></svg>
          <span class="w-[9px] h-[11px] my-auto bg-[#cbcbcb]"></span>
          <svg class="w-[6px] h-[4px]"><use href="#down" /></svg>
        </div>
      </div>
      <!-- View control bar -->
      <div class="h-[11px] shrink-0 flex items-center bg-[#f0f0f0] pl-[9px]">
        <button class="w-[42px] text-left">1/8" = 1'-0"</button>
        <div class="w-[152px] flex items-center justify-between">
          <button aria-label="Detail level"><svg class="w-[11px] h-[9px]" viewBox="0 0 11 9"><path d="M.5 1h10v7H.5z" fill="#fff" stroke="#59616d" /><path d="M1 2h9" stroke="#8fb4d8" /></svg></button>
          <button aria-label="Visual style"><svg class="w-[10px] h-[9px]" viewBox="0 0 10 9"><path d="M.5 3.500h6.500V8.500H.5zM.5 3.500 3 .8h6.500v5L7 8.500M7 3.500 9.500.8" fill="#fff" stroke="#333" /></svg></button>
          <button aria-label="Sun path"><svg class="w-[10px] h-[9px]" viewBox="0 0 10 9"><circle cx="4" cy="4" r="2.500" fill="#ffe89a" stroke="#e39c20" stroke-width="1.300" /><use href="#redx" x="5" y="4" width="5" height="5" /></svg></button>
          <button aria-label="Shadows"><svg class="w-[10px] h-[9px]" viewBox="0 0 10 9"><circle cx="4" cy="3.500" r="2.700" fill="#e6f1fb" stroke="#3d88cc" /><path d="M1 8.500h4" stroke="#333" /><use href="#redx" x="5" y="4" width="5" height="5" /></svg></button>
          <button aria-label="Crop view"><svg class="w-[11px] h-[9px]" viewBox="0 0 11 9"><path d="M2 0v7h9M0 2h8v7" fill="none" stroke="#2f6fae" stroke-width="1.200" /><use href="#redx" x="3" y="3" width="5" height="5" /></svg></button>
          <button aria-label="Crop region"><svg class="w-[11px] h-[9px]" viewBox="0 0 11 9"><path d="M2 0v7h9M0 2h7v7" fill="none" stroke="#2f6fae" stroke-width="1.200" /><circle cx="8.500" cy="3" r="1.800" fill="#cfe6fa" stroke="#3d88cc" /></svg></button>
          <button aria-label="Hide or isolate"><svg class="w-[10px] h-[7px]" viewBox="0 0 10 7"><path d="M0 1.500l3 1c2-2 4-2 5-1l1.500 2" fill="none" stroke="#444" /><circle cx="2.500" cy="4" r="1.600" fill="#fff" stroke="#444" /><circle cx="7.300" cy="4.500" r="1.700" fill="#fff" stroke="#444" /></svg></button>
          <button aria-label="Reveal hidden"><svg class="w-[6px] h-[9px]" viewBox="0 0 6 9"><circle cx="3" cy="3" r="2" fill="#a8d4f7" stroke="#2d8fe0" /><path d="M3 5.500v3" stroke="#2d6fb0" stroke-width="1.500" /></svg></button>
          <button aria-label="View properties"><svg class="w-[10px] h-[9px]" viewBox="0 0 10 9"><path d="M.5 1.500h8v6h-8z" fill="#fff" stroke="#333" /><circle cx="6.500" cy="5" r="1.700" fill="#ddd" stroke="#333" /><path d="M7.500 6.500 9.500 8.500" stroke="#333" /></svg></button>
          <button aria-label="Analytical model"><svg class="w-[11px] h-[9px]" viewBox="0 0 11 9"><path d="M1 8V3l3-2 3 2v5z" fill="#f2b48c" stroke="#a3562a" /><path d="M6 2h4v6.500H6z" fill="#c7cbe8" stroke="#555" /><path d="M3 5.500h2v3" fill="none" stroke="#7a3a1c" /></svg></button>
          <button aria-label="Constraints"><svg class="w-[11px] h-[9px]" viewBox="0 0 11 9"><path d="M1 0v9M10 0v3M1 2h9" stroke="#444" /><path d="M6 5.500h4.500v3H6z" fill="#777" stroke="#444" /></svg></button>
          <svg class="w-[4px] h-[6px]"><use href="#left" /></svg>
        </div>
        <div class="flex-1 flex items-center justify-between pr-[14px] bg-[#f0f0f0]">
          <span></span>
          <span class="w-[11px] h-[9px] bg-[#c6c6c6]"></span>
          <svg class="w-[4px] h-[6px]"><use href="#right" /></svg>
        </div>
      </div>
    </section>
  </main>

  <!-- Status bar -->
  <footer class="h-4 shrink-0 flex items-center bg-[#c9c9c9] whitespace-nowrap">
    <p class="shrink-0 pl-[2px] pr-px">Click to select, TAB for alternates, CTRL adds, SHIFT unselects.</p>
    <svg class="w-[11px] h-[11px] shrink-0" viewBox="0 0 11 11"><path d="M1 5h4v5H1z" fill="#6fb7ea" stroke="#2b6d9f" /><path d="M4 4V2.500a2 2 0 0 1 4 0V5" fill="none" stroke="#3d8f47" stroke-width="1.300" /><path d="M6 5.500h4V10H6z" fill="#b9e0bd" stroke="#3d8f47" /></svg>
    <div class="relative ml-px">
      <select aria-label="Workset" class="block w-[124px] h-3 bg-white appearance-none"><option></option></select>
      <svg class="absolute right-[2px] top-1 w-[6px] h-[4px] opacity-50 pointer-events-none"><use href="#down" /></svg>
    </div>
    <svg class="w-[10px] h-[10px] ml-[6px] mr-[2px]" viewBox="0 0 10 10"><path d="M.5 1h8L5.500 5v4l-2-1V5z" fill="#bbb" stroke="#999" /></svg>:0
    <button aria-label="Editing requests" class="ml-[14px]"><svg class="w-[11px] h-[11px]"><use href="#binder" /></svg></button>
    <svg class="w-[11px] h-[11px] ml-1" viewBox="0 0 11 11"><path d="M2 1h8v8H2z" fill="#b3b3b3" stroke="#999" /><path d="M0 9.500h10M4 3v4M7 4v4" stroke="#8d8d8d" /></svg>
    <div class="relative ml-1">
      <select aria-label="Design option" disabled class="block w-[130px] h-3 pl-[2px] bg-white text-[#8a8a8a] opacity-100 appearance-none leading-[12px]"><option>Main Model</option></select>
      <svg class="absolute right-[2px] top-1 w-[6px] h-[4px] opacity-50 pointer-events-none"><use href="#down" /></svg>
    </div>
    <div class="ml-auto mr-[45px] flex items-center gap-[5px]">
      <button aria-label="Select links"><svg class="w-[11px] h-[11px]" viewBox="0 0 11 11"><path d="M.5 2h10v2.500H.5z" fill="#f2c230" stroke="#b08a12" stroke-width=".8" /><use href="#pointer" x="4" y="3" width="6" height="8" /></svg></button>
      <button aria-label="Select underlay"><svg class="w-[11px] h-[11px]" viewBox="0 0 11 11"><path d="M.5 7 4 3h4v5H1z" fill="#b9dbf6" stroke="#2d6fb0" /><use href="#redx" x="6" y="0" width="5" height="5" /><use href="#pointer" x="5" y="4" width="5" height="7" /></svg></button>
      <button aria-label="Select pinned"><svg class="w-[10px] h-[11px]" viewBox="0 0 10 11"><path d="M1 1h6v2L6 4.500 8 6H0l2-1.500L1 3zM4 6v3" fill="#f29a3c" stroke="#c06a15" /><use href="#pointer" x="4" y="3" width="6" height="8" /></svg></button>
      <button aria-label="Select by face"><svg class="w-[11px] h-[11px]" viewBox="0 0 11 11"><path d="M6 1H2L.8 2.500V9.500H7" fill="#d8ebfa" stroke="#2d8fe0" /><use href="#redx" x="6" y="0" width="5" height="5" /><use href="#pointer" x="5" y="4" width="5" height="7" /></svg></button>
      <button aria-label="Drag on selection"><svg class="w-[11px] h-[11px]" viewBox="0 0 11 11"><path d="M3.500 0v7M0 3.500h7" stroke="#333" stroke-width="1.300" /><use href="#pointer" x="5" y="3" width="6" height="8" /></svg></button>
      <svg class="w-[9px] h-[9px]" viewBox="0 0 9 9"><circle cx="4.500" cy="4.500" r="3.300" fill="#ccc" stroke="#a3a3a3" stroke-width="1.300" /></svg>
      <button class="flex items-center gap-px"><svg class="w-[10px] h-[10px]" viewBox="0 0 10 10"><path d="M.5 1h9L6 5v4.500L4 8V5z" fill="#a9bdd2" stroke="#5a6a7c" /></svg>:0</button>
    </div>
  </footer>
</body>
</html>
